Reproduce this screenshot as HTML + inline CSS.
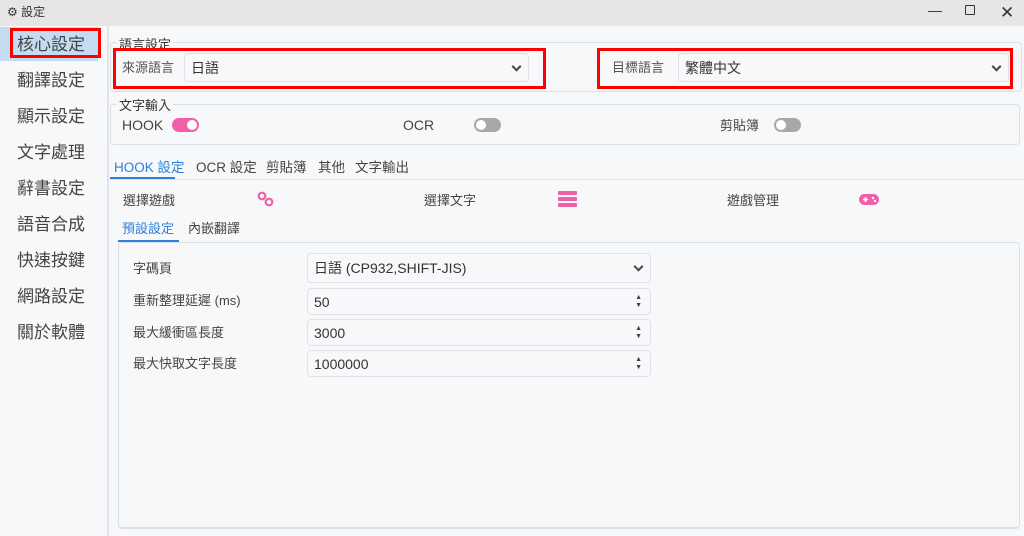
<!DOCTYPE html>
<html><head><meta charset="utf-8"><style>
*{box-sizing:border-box;margin:0;padding:0}
body{width:1024px;height:536px;overflow:hidden;background:#f7f8fa;font-family:"Liberation Sans","Noto Sans CJK TC",sans-serif;color:#333;position:relative}
.a{position:absolute}
.t{position:absolute;white-space:nowrap;line-height:16px}
.side{font-size:17px;color:#444;line-height:20px}
.box{position:absolute;border:1px solid #dcdfe3;border-radius:4px}
.combo{position:absolute;background:#f7f8fa;border:1px solid #e0e2e6;border-radius:4px;font-size:14px;line-height:16px;padding-left:6px;display:flex;align-items:center;color:#333}
.red{position:absolute;border:3px solid #f00}
.tog{position:absolute;width:27px;height:14px;border-radius:7px}
.tog::after{content:"";position:absolute;top:2px;width:10px;height:10px;border-radius:5px;background:#fff}
.on{background:#f060a8}.on::after{right:2px}
.off{background:#a8a8a8}.off::after{left:2px}
.chev{position:absolute;right:8px;top:50%;width:7px;height:7px;border-right:2px solid #444;border-bottom:2px solid #444;transform:translateY(-70%) rotate(45deg)}
.spin{position:absolute;right:8px;top:50%;transform:translateY(-50%);font-size:7px;line-height:8px;color:#444}
.f13{font-size:13px;color:#444}
.tab{font-size:13.5px;color:#444;line-height:17px}
</style></head><body>
<div class="a" style="left:0;top:0;width:1024px;height:26px;background:#e7e5e5"></div>
<div class="t" style="left:7px;top:5px;font-size:12px;line-height:14px">⚙ 設定</div>
<div class="t" style="left:928px;top:2px;font-size:14px">—</div>
<div class="a" style="left:965px;top:5px;width:10px;height:10px;border:1.5px solid #333;border-radius:1px"></div>
<div class="t" style="left:1000px;top:3px;font-size:17px;line-height:20px">✕</div>

<div class="a" style="left:107px;top:26px;width:2px;height:510px;background:#e2e3e6"></div>
<div class="a" style="left:0;top:27px;width:98px;height:34px;background:#c4dbf2"></div>
<div class="red" style="left:10px;top:28px;width:91px;height:30px"></div>
<div class="t side" style="left:17px;top:35px">核心設定</div>
<div class="t side" style="left:17px;top:71px">翻譯設定</div>
<div class="t side" style="left:17px;top:107px">顯示設定</div>
<div class="t side" style="left:17px;top:143px">文字處理</div>
<div class="t side" style="left:17px;top:179px">辭書設定</div>
<div class="t side" style="left:17px;top:215px">語音合成</div>
<div class="t side" style="left:17px;top:251px">快速按鍵</div>
<div class="t side" style="left:17px;top:287px">網路設定</div>
<div class="t side" style="left:17px;top:323px">關於軟體</div>

<div class="box" style="left:110px;top:42px;width:912px;height:50px"></div>
<div class="t f13" style="left:117px;top:37px;background:#f7f8fa;padding:0 2px;color:#333">語言設定</div>
<div class="t f13" style="left:122px;top:60px;color:#555">來源語言</div>
<div class="combo" style="left:184px;top:53px;width:345px;height:29px">日語<div class="chev"></div></div>
<div class="red" style="left:113px;top:48px;width:433px;height:41px"></div>
<div class="t f13" style="left:612px;top:60px;color:#555">目標語言</div>
<div class="combo" style="left:678px;top:53px;width:331px;height:29px">繁體中文<div class="chev"></div></div>
<div class="red" style="left:597px;top:48px;width:416px;height:41px"></div>

<div class="box" style="left:110px;top:104px;width:910px;height:41px"></div>
<div class="t f13" style="left:117px;top:98px;background:#f7f8fa;padding:0 2px;color:#333">文字輸入</div>
<div class="t" style="left:122px;top:117px;font-size:14px;color:#444">HOOK</div>
<div class="tog on" style="left:172px;top:118px"></div>
<div class="t" style="left:403px;top:117px;font-size:14px;color:#444">OCR</div>
<div class="tog off" style="left:474px;top:118px"></div>
<div class="t f13" style="left:720px;top:118px">剪貼簿</div>
<div class="tog off" style="left:774px;top:118px"></div>

<div class="a" style="left:110px;top:179px;width:914px;height:1px;background:#e0e2e6"></div>
<div class="t tab" style="left:114px;top:159px;color:#2f7fd8">HOOK 設定</div>
<div class="a" style="left:110px;top:177px;width:65px;height:2px;background:#2f7fd8"></div>
<div class="t tab" style="left:196px;top:159px">OCR 設定</div>
<div class="t tab" style="left:266px;top:159px">剪貼簿</div>
<div class="t tab" style="left:318px;top:159px">其他</div>
<div class="t tab" style="left:355px;top:159px">文字輸出</div>

<div class="t f13" style="left:123px;top:193px">選擇遊戲</div>
<svg class="a" style="left:257px;top:191px" width="18" height="16"><circle cx="5" cy="5" r="3.3" fill="none" stroke="#f060a8" stroke-width="2.2"/><circle cx="12" cy="11" r="3.3" fill="none" stroke="#f060a8" stroke-width="2.2"/></svg>
<div class="t f13" style="left:424px;top:193px">選擇文字</div>
<svg class="a" style="left:558px;top:191px" width="20" height="16"><rect x="0" y="0" width="19" height="4" rx="1" fill="#f060a8"/><rect x="0" y="6" width="19" height="4" rx="1" fill="#f060a8"/><rect x="0" y="12" width="19" height="4" rx="1" fill="#f060a8"/></svg>
<div class="t f13" style="left:727px;top:193px">遊戲管理</div>
<svg class="a" style="left:859px;top:194px" width="21" height="12"><rect x="0" y="0" width="20" height="11" rx="5.5" fill="#f060a8"/><path d="M4 5.5h5M6.5 3v5" stroke="#fff" stroke-width="1.6"/><circle cx="14" cy="4" r="1.2" fill="#fff"/><circle cx="16" cy="7" r="1.2" fill="#fff"/></svg>

<div class="t f13" style="left:122px;top:221px;color:#2f7fd8">預設設定</div>
<div class="a" style="left:118px;top:240px;width:61px;height:2px;background:#2f7fd8"></div>
<div class="t f13" style="left:188px;top:221px">內嵌翻譯</div>
<div class="box" style="left:118px;top:242px;width:902px;height:287px;border-bottom:2px solid #dcdfe3"></div>

<div class="t f13" style="left:133px;top:261px">字碼頁</div>
<div class="combo" style="left:307px;top:253px;width:344px;height:30px">日語 (CP932,SHIFT-JIS)<div class="chev"></div></div>
<div class="t f13" style="left:133px;top:293px">重新整理延遲 (ms)</div>
<div class="combo" style="left:307px;top:288px;width:344px;height:27px">50<div class="spin">▲<br>▼</div></div>
<div class="t f13" style="left:133px;top:325px">最大緩衝區長度</div>
<div class="combo" style="left:307px;top:319px;width:344px;height:27px">3000<div class="spin">▲<br>▼</div></div>
<div class="t f13" style="left:133px;top:356px">最大快取文字長度</div>
<div class="combo" style="left:307px;top:350px;width:344px;height:27px">1000000<div class="spin">▲<br>▼</div></div>
</body></html>
